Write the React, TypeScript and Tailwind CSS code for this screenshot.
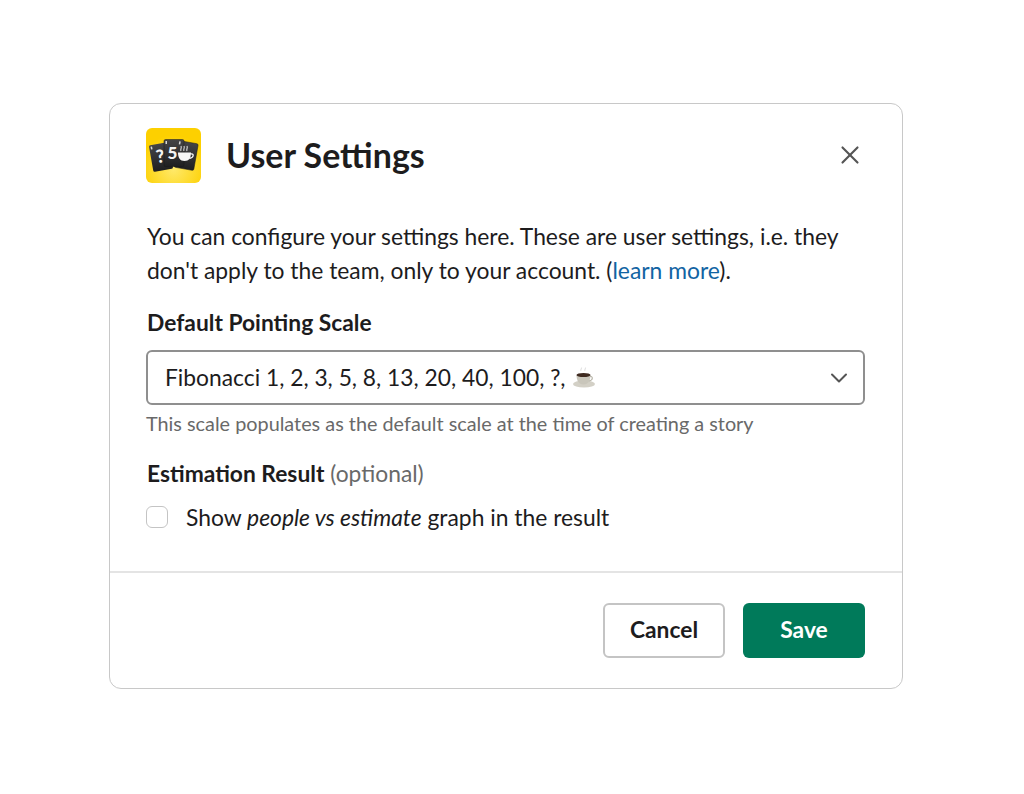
import { ChevronDown, X } from "lucide-react";

function AppLogo() {
  return (
    <svg width="55" height="55" viewBox="0 0 55 55" className="shrink-0">
      <defs>
        <radialGradient id="logoBg" cx="50%" cy="75%" r="62%">
          <stop offset="0%" stopColor="#ffe96a" />
          <stop offset="100%" stopColor="#fdd000" />
        </radialGradient>
        <linearGradient id="cardBg" x1="0" y1="0" x2="0" y2="1">
          <stop offset="0%" stopColor="#444446" />
          <stop offset="100%" stopColor="#1f1f21" />
        </linearGradient>
      </defs>
      <rect width="55" height="55" rx="6" fill="url(#logoBg)" />
      <g transform="rotate(-10 15 29)">
        <rect x="5" y="15.500" width="20" height="27" rx="1.500" fill="url(#cardBg)" />
        <rect x="6.500" y="17" width="1.500" height="3" fill="#d8d8d8" />
        <text x="14.500" y="34.500" fontSize="18" fontWeight="900" fill="#f4f4f4" textAnchor="middle" fontFamily="Lato, sans-serif">?</text>
      </g>
      <g transform="rotate(10 40 28)">
        <rect x="30" y="14" width="20" height="27" rx="1.500" fill="url(#cardBg)" stroke="#18181a" strokeWidth=".5" />
      </g>
      <g>
        <rect x="18" y="11.500" width="20" height="27" rx="1.500" fill="url(#cardBg)" stroke="#18181a" strokeWidth=".5" />
        <rect x="19.500" y="13" width="1.500" height="3" fill="#d8d8d8" />
        <text x="26.500" y="31" fontSize="17" fontWeight="900" fill="#f4f4f4" textAnchor="middle" fontFamily="Lato, sans-serif">5</text>
      </g>
      <rect x="33" y="13.500" width="1.500" height="3" fill="#d8d8d8" transform="rotate(10 34 15)" />
      <path d="M32 24.500h13c0 5-2 8.500-6.500 8.500S32 29.500 32 24.500z" fill="#f6f6f6" />
      <path d="M44.500 26c3.500-1 4 3.500-1.200 4.500" fill="none" stroke="#f6f6f6" strokeWidth="1.300" />
      <path d="M35 23c-1-2 1-2.500 0-5M38 23c-1-2 1-2.500 0-5M41 23c-1-2 1-2.500 0-5" fill="none" stroke="#dcdcdc" strokeWidth="1.100" />
    </svg>
  );
}

function CoffeeCup() {
  return (
    <svg width="24" height="24" viewBox="0 0 24 24" className="ml-[6px] shrink-0">
      <path d="M9 5c-1-1.500 1-2 .5-3.500M13 5c-1-1.500 1-2 .5-3.500" fill="none" stroke="#e4e4e4" strokeWidth="1.200" />
      <ellipse cx="12" cy="18" rx="11" ry="3.600" fill="#d3d0c6" />
      <path d="M4.500 9h14c0 5-2 9.500-7 9.500S4.500 14 4.500 9z" fill="#c9c6bb" />
      <path d="M18 10.500c3-.5 3.500 3.500-1 4.500" fill="none" stroke="#b9b6aa" strokeWidth="1.200" />
      <ellipse cx="11.500" cy="9" rx="7" ry="2" fill="#3f2a20" />
    </svg>
  );
}

export default function App() {
  return (
    <div className="min-h-[794px] bg-white pl-[109px] pt-[103px] font-['Lato',sans-serif] text-[#1d1c1d]">
      <div className="w-[794px] rounded-xl border border-[#c8c8c8] bg-white">
        <div className="flex items-center justify-between pl-[36px] pr-[37px] pt-[24px]">
          <div className="flex items-center gap-[25px]">
            <AppLogo />
            <h1 className="mb-[2px] text-[33.900px] font-bold leading-[40px]">User Settings</h1>
          </div>
          <button className="mb-[2px] text-[#555]">
            <X size={30} strokeWidth={1.700} />
          </button>
        </div>

        <div className="pl-[36px] pr-[37px] pt-[36px]">
          <p className="pl-px text-[22.850px] leading-[34px]">
            You can configure your settings here. These are user settings, i.e. they
            <br />
            don't apply to the team, only to your account. (
            <span className="text-[#1264a3]">learn more</span>).
          </p>

          <div className="mt-[18px] pl-px text-[22.800px] font-bold leading-[34px]">Default Pointing Scale</div>
          <div className="mt-[11px] flex h-[55px] items-center justify-between rounded-md border-2 border-[#8f8f8f] pl-[17px] pr-[10px]">
            <div className="flex items-center text-[22.800px]">
              Fibonacci 1, 2, 3, 5, 8, 13, 20, 40, 100, ?,
              <CoffeeCup />
            </div>
            <ChevronDown size={28} strokeWidth={1.700} className="text-[#555]" />
          </div>
          <p className="mt-[4px] text-[19.830px] leading-[28px] text-[#696969]">
            This scale populates as the default scale at the time of creating a story
          </p>

          <div className="mt-[19px] pl-px text-[22.800px] leading-[34px]">
            <span className="font-bold">Estimation Result</span>{" "}
            <span className="text-[#696969]">(optional)</span>
          </div>
          <label className="mt-[10px] flex items-center gap-[18px] text-[22.850px] leading-[34px]">
            <span className="h-[22px] w-[22px] rounded-md border border-[#c4c4c4] bg-white" />
            <span>
              Show <em>people vs estimate</em> graph in the result
            </span>
          </label>
        </div>

        <div className="mt-[37px] flex justify-end gap-[18px] border-t-2 border-[#e4e4e4] pb-[30px] pr-[37px] pt-[30px]">
          <button className="h-[55px] w-[122px] rounded-md border-2 border-[#c4c4c4] bg-white pb-[2px] text-[22.800px] font-bold">
            Cancel
          </button>
          <button className="h-[55px] w-[122px] rounded-md bg-[#007a5a] pb-[2px] text-[22.800px] font-bold text-white">
            Save
          </button>
        </div>
      </div>
    </div>
  );
}
